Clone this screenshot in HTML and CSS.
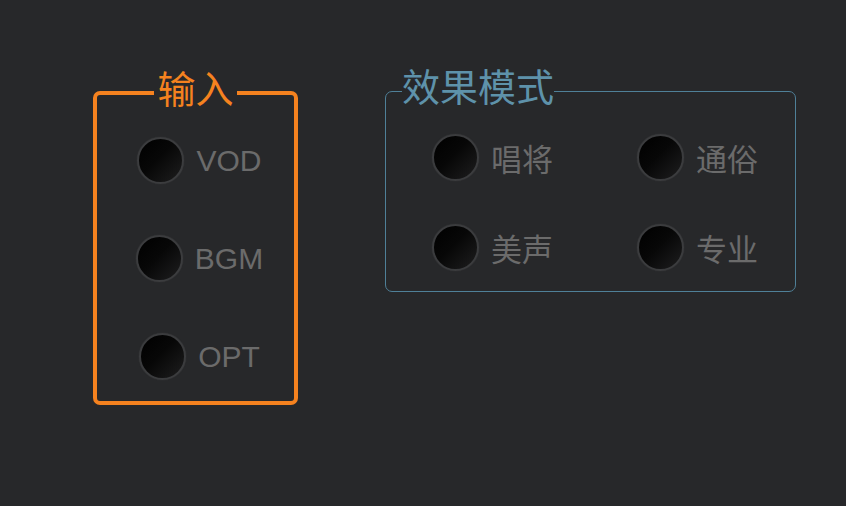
FILE: index.html
```html
<!DOCTYPE html>
<html lang="zh-CN">
<head>
<meta charset="utf-8">
<title>面板</title>
<link rel="stylesheet" href="styles.css">
</head>
<body>
<div class="panel">
  <fieldset class="group group-input">
    <legend class="group-title">输入</legend>
    <div class="input-list">
      <div class="option"><span class="led"></span><span class="label latin">VOD</span></div>
      <div class="option"><span class="led"></span><span class="label latin">BGM</span></div>
      <div class="option"><span class="led"></span><span class="label latin">OPT</span></div>
    </div>
  </fieldset>
  <fieldset class="group group-mode">
    <legend class="group-title">效果模式</legend>
    <div class="mode-grid">
      <div class="option"><span class="led"></span><span class="label">唱将</span></div>
      <div class="option"><span class="led"></span><span class="label">通俗</span></div>
      <div class="option"><span class="led"></span><span class="label">美声</span></div>
      <div class="option"><span class="led"></span><span class="label">专业</span></div>
    </div>
  </fieldset>
</div>
</body>
</html>
```

FILE: styles.css
```css
html, body {
  margin: 0;
  padding: 0;
  background: #27282a;
  height: 100%;
}

body {
  font-family: "Liberation Sans", "Noto Sans CJK SC", sans-serif;
  overflow: hidden;
}

.panel {
  display: flex;
  align-items: flex-start;
  gap: 87px;
  padding: 63px 0 0 93px;
}

.group {
  margin: 0;
  min-inline-size: 0;
}

.group-title {
  font-family: "Noto Sans CJK SC", sans-serif;
  font-size: 38px;
  line-height: 44px;
  padding: 0 0 12px;
}

.group-input {
  margin-top: 2px;
  width: 205px;
  box-sizing: border-box;
  border: 4px solid #f5821f;
  border-radius: 7px;
  padding: 16px 0 21px;
}

.group-input .group-title {
  color: #f5821f;
  margin: 0 auto;
  padding: 0 3px 12px;
}

.group-mode {
  width: 411px;
  box-sizing: border-box;
  border: 1px solid #4f8098;
  border-radius: 7px;
  padding: 15px 0 20px;
}

.group-mode .group-title {
  color: #5e92aa;
  margin-left: 16px;
}

.input-list {
  display: flex;
  flex-direction: column;
  align-items: center;
  gap: 51px;
  padding-left: 8px;
}

.mode-grid {
  display: grid;
  grid-template-columns: 205px 205px;
  row-gap: 43px;
  justify-items: center;
  padding-left: 4px;
}

.option {
  display: flex;
  align-items: center;
  gap: 12px;
  height: 47px;
}

.led {
  width: 47px;
  height: 47px;
  box-sizing: border-box;
  border-radius: 50%;
  border: 2px solid #3b3c3e;
  background: linear-gradient(135deg, #000 0%, #070707 45%, #1e1e1f 100%);
  box-shadow: 0 0 1px rgba(90, 90, 90, 0.6);
}

.label {
  color: #6b6b6b;
  font-family: "Noto Sans CJK SC", sans-serif;
  font-size: 31px;
  line-height: 1;
}

.label.latin {
  font-family: "Liberation Sans", Arial, sans-serif;
  font-size: 30px;
}
```
